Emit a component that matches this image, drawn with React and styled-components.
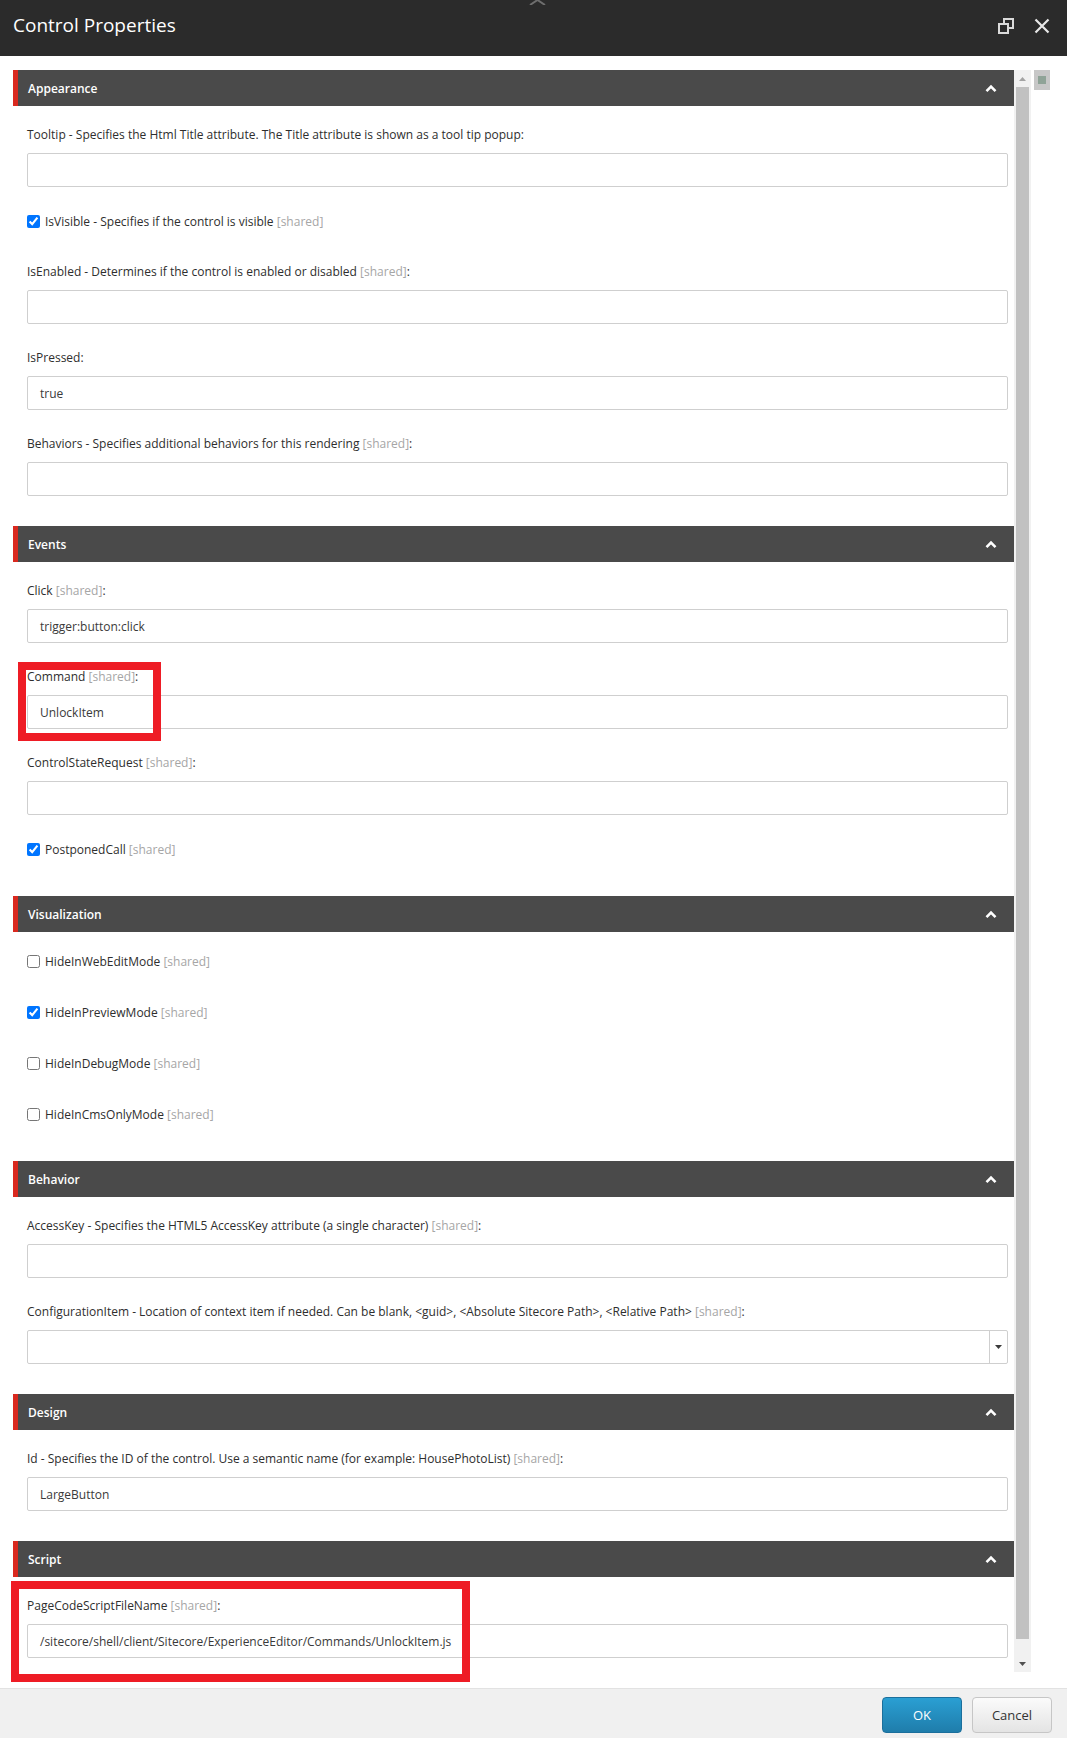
import React from "react";
import styled, { createGlobalStyle } from "styled-components";

const GlobalStyle = createGlobalStyle`
  html, body { margin: 0; padding: 0; background: #ffffff; }
  body { font-family: "Open Sans", "Liberation Sans", sans-serif; }
  * { box-sizing: border-box; }
`;

const Page = styled.div`
  position: relative;
  width: 1067px;
  height: 1738px;
  display: flex;
  flex-direction: column;
  overflow: hidden;
  background: #ffffff;
`;

const TitleBar = styled.header`
  height: 56px;
  flex: none;
  background: #2b2b2b;
  display: flex;
  align-items: center;
  justify-content: space-between;
  padding: 0 17px 0 13px;
`;

const Title = styled.h1`
  margin: 0;
  font-family: "Open Sans", sans-serif;
  font-weight: 400;
  font-size: 19px;
  color: #ffffff;
  line-height: 24px;
  margin-top: -6px;
`;

const TitleActions = styled.div`
  display: flex;
  align-items: center;
  gap: 20px;
  margin-top: -4px;
`;

const IconButton = styled.span`
  display: inline-flex;
  width: 16px;
  height: 16px;
  align-items: center;
  justify-content: center;
`;

const Body = styled.div`
  flex: 1;
  display: flex;
  padding: 14px 17px 16px 13px;
  min-height: 0;
`;

const Viewport = styled.div`
  flex: 1;
  overflow: hidden;
`;

const SectionHeader = styled.div`
  height: 36px;
  background: #4a4a4a;
  border-left: 5px solid #d9291f;
  display: flex;
  align-items: center;
  justify-content: space-between;
  padding: 0 17px 0 10px;
`;

const SectionTitle = styled.span`
  color: #ffffff;
  font-weight: 600;
  font-size: 12px;
`;

const SectionBody = styled.div`
  display: flex;
  flex-direction: column;
  gap: 25px;
  padding: 20px 6px 30px 14px;
`;

const Field = styled.div`
  display: flex;
  flex-direction: column;
  gap: 9px;
`;

const Label = styled.label`
  font-size: 12px;
  line-height: 18px;
  color: #2e2e2e;
  white-space: nowrap;
`;

const Shared = styled.span`
  color: #a6a6a6;
`;

const InputBox = styled.div`
  height: 34px;
  border: 1px solid #cfcfcf;
  border-radius: 2px;
  background: #ffffff;
  display: flex;
  align-items: center;
  padding-left: ${(p) => (p.$select ? "0" : "12px")};
  font-size: 12px;
  color: #3a3a3a;
`;

const SelectValue = styled.div`
  flex: 1;
  height: 100%;
`;

const SelectArrow = styled.div`
  width: 18px;
  height: 100%;
  border-left: 1px solid #cfcfcf;
  display: flex;
  align-items: center;
  justify-content: center;
`;

const CheckRow = styled.div`
  display: flex;
  align-items: center;
  gap: 5px;
  height: 18px;
  margin-bottom: 8px;
  font-size: 12px;
  color: #2e2e2e;
  white-space: nowrap;
`;

const Check = styled.input`
  width: 13px;
  height: 13px;
  margin: 0;
  flex: none;
`;

const Scrollbar = styled.div`
  width: 17px;
  flex: none;
  background: #f1f1f1;
  display: flex;
  flex-direction: column;
`;

const ScrollArrow = styled.div`
  height: 17px;
  flex: none;
  display: flex;
  align-items: center;
  justify-content: center;
`;

const Thumb = styled.div`
  flex: 1;
  margin: 0 2px 16px 2px;
  background: #c1c1c1;
`;

const Corner = styled.div`
  width: 16px;
  height: 20px;
  margin-left: 3px;
  background: #c7c7c7;
  display: flex;
  align-items: center;
  justify-content: center;
  flex: none;
`;

const CornerDot = styled.div`
  width: 8px;
  height: 8px;
  background: #8fa397;
`;

const Footer = styled.footer`
  height: 50px;
  flex: none;
  background: #f0f0f0;
  border-top: 1px solid #e2e2e2;
  display: flex;
  justify-content: flex-end;
  align-items: flex-start;
  gap: 10px;
  padding: 8px 15px 0 0;
`;

const Button = styled.button`
  width: 80px;
  height: 36px;
  border-radius: 4px;
  font-family: "Open Sans", sans-serif;
  font-size: 13px;
  cursor: pointer;
  border: 1px solid ${(p) => (p.$primary ? "#1b6f9c" : "#c6c6c6")};
  color: ${(p) => (p.$primary ? "#ffffff" : "#333333")};
  background: ${(p) =>
    p.$primary
      ? "linear-gradient(#2a9fd3, #1f7dab)"
      : "linear-gradient(#fbfbfb, #e4e4e4)"};
`;

const Annotation = styled.div`
  position: absolute;
  border: 8px solid #ee1c25;
  pointer-events: none;
`;

const TopMark = styled.svg`
  position: absolute;
  left: 529px;
  top: 0;
`;

const Chevron = () => (
  <svg width="12" height="9" viewBox="0 0 12 9">
    <path d="M1.5 7.2 L6 2.7 L10.5 7.2" fill="none" stroke="#fff" strokeWidth="2.6" />
  </svg>
);

const Section = ({ title, children }) => (
  <section>
    <SectionHeader>
      <SectionTitle>{title}</SectionTitle>
      <Chevron />
    </SectionHeader>
    <SectionBody>{children}</SectionBody>
  </section>
);

const TextField = ({ label, shared, value, select }) => (
  <Field>
    <Label>
      {label}
      {shared && <Shared> [shared]</Shared>}:
    </Label>
    {select ? (
      <InputBox $select>
        <SelectValue />
        <SelectArrow>
          <svg width="7" height="4" viewBox="0 0 7 4">
            <path d="M0 0 H7 L3.5 4 Z" fill="#3b3b3b" />
          </svg>
        </SelectArrow>
      </InputBox>
    ) : (
      <InputBox>{value}</InputBox>
    )}
  </Field>
);

const CheckField = ({ label, checked }) => (
  <CheckRow>
    <Check type="checkbox" defaultChecked={checked} />
    <span>
      {label} <Shared>[shared]</Shared>
    </span>
  </CheckRow>
);

export default function App() {
  return (
    <>
      <GlobalStyle />
      <Page>
        <TitleBar>
          <Title>Control Properties</Title>
          <TitleActions>
            <IconButton>
              <svg width="16" height="16" viewBox="0 0 16 16">
                <rect x="6" y="1" width="9" height="9" fill="none" stroke="#dadada" strokeWidth="2" />
                <rect x="1" y="6" width="9" height="9" fill="#2b2b2b" stroke="#dadada" strokeWidth="2" />
              </svg>
            </IconButton>
            <IconButton>
              <svg width="16" height="16" viewBox="0 0 16 16">
                <path d="M1.5 1.5 L14.5 14.5 M14.5 1.5 L1.5 14.5" stroke="#e8e8e8" strokeWidth="2.2" />
              </svg>
            </IconButton>
          </TitleActions>
        </TitleBar>

        <Body>
          <Viewport>
            <Section title="Appearance">
              <TextField label="Tooltip - Specifies the Html Title attribute. The Title attribute is shown as a tool tip popup" />
              <CheckField label="IsVisible - Specifies if the control is visible" checked />
              <TextField label="IsEnabled - Determines if the control is enabled or disabled" shared />
              <TextField label="IsPressed" value="true" />
              <TextField label="Behaviors - Specifies additional behaviors for this rendering" shared />
            </Section>
            <Section title="Events">
              <TextField label="Click" shared value="trigger:button:click" />
              <TextField label="Command" shared value="UnlockItem" />
              <TextField label="ControlStateRequest" shared />
              <CheckField label="PostponedCall" checked />
            </Section>
            <Section title="Visualization">
              <CheckField label="HideInWebEditMode" />
              <CheckField label="HideInPreviewMode" checked />
              <CheckField label="HideInDebugMode" />
              <CheckField label="HideInCmsOnlyMode" />
            </Section>
            <Section title="Behavior">
              <TextField label="AccessKey - Specifies the HTML5 AccessKey attribute (a single character)" shared />
              <TextField
                label="ConfigurationItem - Location of context item if needed. Can be blank, <guid>, <Absolute Sitecore Path>, <Relative Path>"
                shared
                select
              />
            </Section>
            <Section title="Design">
              <TextField
                label="Id - Specifies the ID of the control. Use a semantic name (for example: HousePhotoList)"
                shared
                value="LargeButton"
              />
            </Section>
            <Section title="Script">
              <TextField
                label="PageCodeScriptFileName"
                shared
                value="/sitecore/shell/client/Sitecore/ExperienceEditor/Commands/UnlockItem.js"
              />
            </Section>
          </Viewport>
          <Scrollbar>
            <ScrollArrow>
              <svg width="7" height="4" viewBox="0 0 7 4">
                <path d="M0 4 H7 L3.5 0 Z" fill="#a3a3a3" />
              </svg>
            </ScrollArrow>
            <Thumb />
            <ScrollArrow>
              <svg width="7" height="4" viewBox="0 0 7 4">
                <path d="M0 0 H7 L3.5 4 Z" fill="#505050" />
              </svg>
            </ScrollArrow>
          </Scrollbar>
          <Corner>
            <CornerDot />
          </Corner>
        </Body>

        <Footer>
          <Button $primary>OK</Button>
          <Button>Cancel</Button>
        </Footer>

        <Annotation style={{ left: 18, top: 662, width: 143, height: 79 }} />
        <Annotation style={{ left: 11, top: 1581, width: 459, height: 101 }} />
        <TopMark width="17" height="5" viewBox="0 0 17 5">
          <path d="M1 5 L8.5 0 L16 5" fill="none" stroke="#6e6e6e" strokeWidth="2" />
        </TopMark>
      </Page>
    </>
  );
}
